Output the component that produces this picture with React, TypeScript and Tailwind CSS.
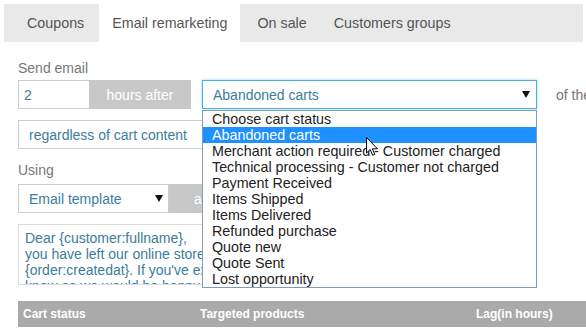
import React from 'react';

const tabs = ['Coupons', 'Email remarketing', 'On sale', 'Customers groups'];

const statuses = [
  'Choose cart status',
  'Abandoned carts',
  'Merchant action required - Customer charged',
  'Technical processing - Customer not charged',
  'Payment Received',
  'Items Shipped',
  'Items Delivered',
  'Refunded purchase',
  'Quote new',
  'Quote Sent',
  'Lost opportunity',
];

function Caret() {
  return (
    <svg width="8" height="7" viewBox="0 0 8 7" className="shrink-0">
      <polygon points="0,0 8,0 4,7" fill="#111" />
    </svg>
  );
}

export default function App() {
  return (
    <div className="relative w-[586px] h-[333px] overflow-hidden bg-white font-['Liberation_Sans',Arial,sans-serif] text-[14px] leading-[16px]">
      {/* Tabs */}
      <div className="ml-[4px] mt-[4px] flex h-[38px] w-[579px] bg-[#e9e9e9] pl-[10px] text-[14.3px]">
        {tabs.map((t, i) => (
          <div
            key={t}
            className={
              'flex shrink-0 items-center px-[13px] text-[#555] ' +
              (i === 1 ? 'bg-white ml-[2px]' : '') +
              (i === 2 ? ' ml-[4px]' : '') +
              (i === 3 ? ' ml-[1px]' : '')
            }
          >
            {t}
          </div>
        ))}
      </div>

      <div className="pl-[18px]">
        {/* Send email */}
        <div className="mt-[18px] text-[#777]">Send email</div>
        <div className="mt-[4px] flex h-[29px] items-center">
          <div className="flex h-full w-[71px] shrink-0 items-center border border-r-0 border-[#ccc] pl-[5px] text-[#3b7d9b]">
            2
          </div>
          <div className="flex h-full w-[102px] shrink-0 items-center justify-center bg-[#c8c8c8] text-white">
            hours after
          </div>
          <div className="ml-[11px] flex h-full w-[335px] shrink-0 items-center justify-between border border-[#47b0d9] pl-[10px] pr-[6px] text-[#3b7d9b] shadow-[0_0_3px_#9fd6ee]">
            <span>Abandoned carts</span>
            <Caret />
          </div>
          <div className="ml-[19px] shrink-0 whitespace-nowrap text-[#777]">of the</div>
        </div>

        {/* Condition */}
        <div className="mt-[11px] flex h-[29px] w-[400px] items-center border border-[#ccc] pl-[10px] text-[#3b7d9b]">
          regardless of cart content
        </div>

        {/* Using */}
        <div className="mt-[13px] text-[#777]">Using</div>
        <div className="mt-[6px] flex h-[29px] items-center">
          <div className="flex h-full w-[151px] shrink-0 items-center justify-between border border-[#ccc] pl-[10px] pr-[5px] text-[#3b7d9b]">
            <span>Email template</span>
            <Caret />
          </div>
          <div className="flex h-full w-[120px] shrink-0 items-center bg-[#c8c8c8] pl-[25px] text-white">
            apply
          </div>
        </div>

        {/* Message */}
        <div className="mt-[11px] h-[61px] w-[420px] overflow-hidden border border-[#ddd] pl-[6px] pt-[5px] text-[#3b7d9b]">
          <div className="whitespace-nowrap">Dear {'{customer:fullname}'},</div>
          <div className="whitespace-nowrap">you have left our online store with some products in your cart</div>
          <div className="whitespace-nowrap">{'{order:createdat}'}. If you've experienced any problems, please let us</div>
          <div className="whitespace-nowrap">know as we would be happy to help you.</div>
        </div>

        {/* Table header */}
        <div className="mt-[16px] flex h-[26px] w-[568px] items-center bg-[#aaa] text-[12px] font-bold text-white">
          <div className="w-[182px] pl-[5px]">Cart status</div>
          <div className="w-[276px]">Targeted products</div>
          <div>Lag(in hours)</div>
        </div>
      </div>

      {/* Open dropdown list */}
      <div className="absolute left-[202px] top-[110px] w-[335px] border border-[#7f9db9] bg-white text-[14.3px] text-[#222]">
        {statuses.map((s, i) => (
          <div
            key={s}
            className={
              'h-[16px] whitespace-nowrap pl-[9px] leading-[16px] ' +
              (i === 1 ? 'bg-[#1e90ff] text-white' : '')
            }
          >
            {s}
          </div>
        ))}
      </div>

      {/* Mouse pointer */}
      <svg
        className="absolute left-[366px] top-[137px]"
        width="13"
        height="20"
        viewBox="0 0 13 20"
      >
        <path
          d="M0.5 0.5 L0.5 16 L4.2 12.5 L6.6 18.3 L8.8 17.4 L6.4 11.8 L11.5 11.8 Z"
          fill="white"
          stroke="black"
          strokeWidth="1"
          strokeLinejoin="round"
        />
      </svg>
    </div>
  );
}
